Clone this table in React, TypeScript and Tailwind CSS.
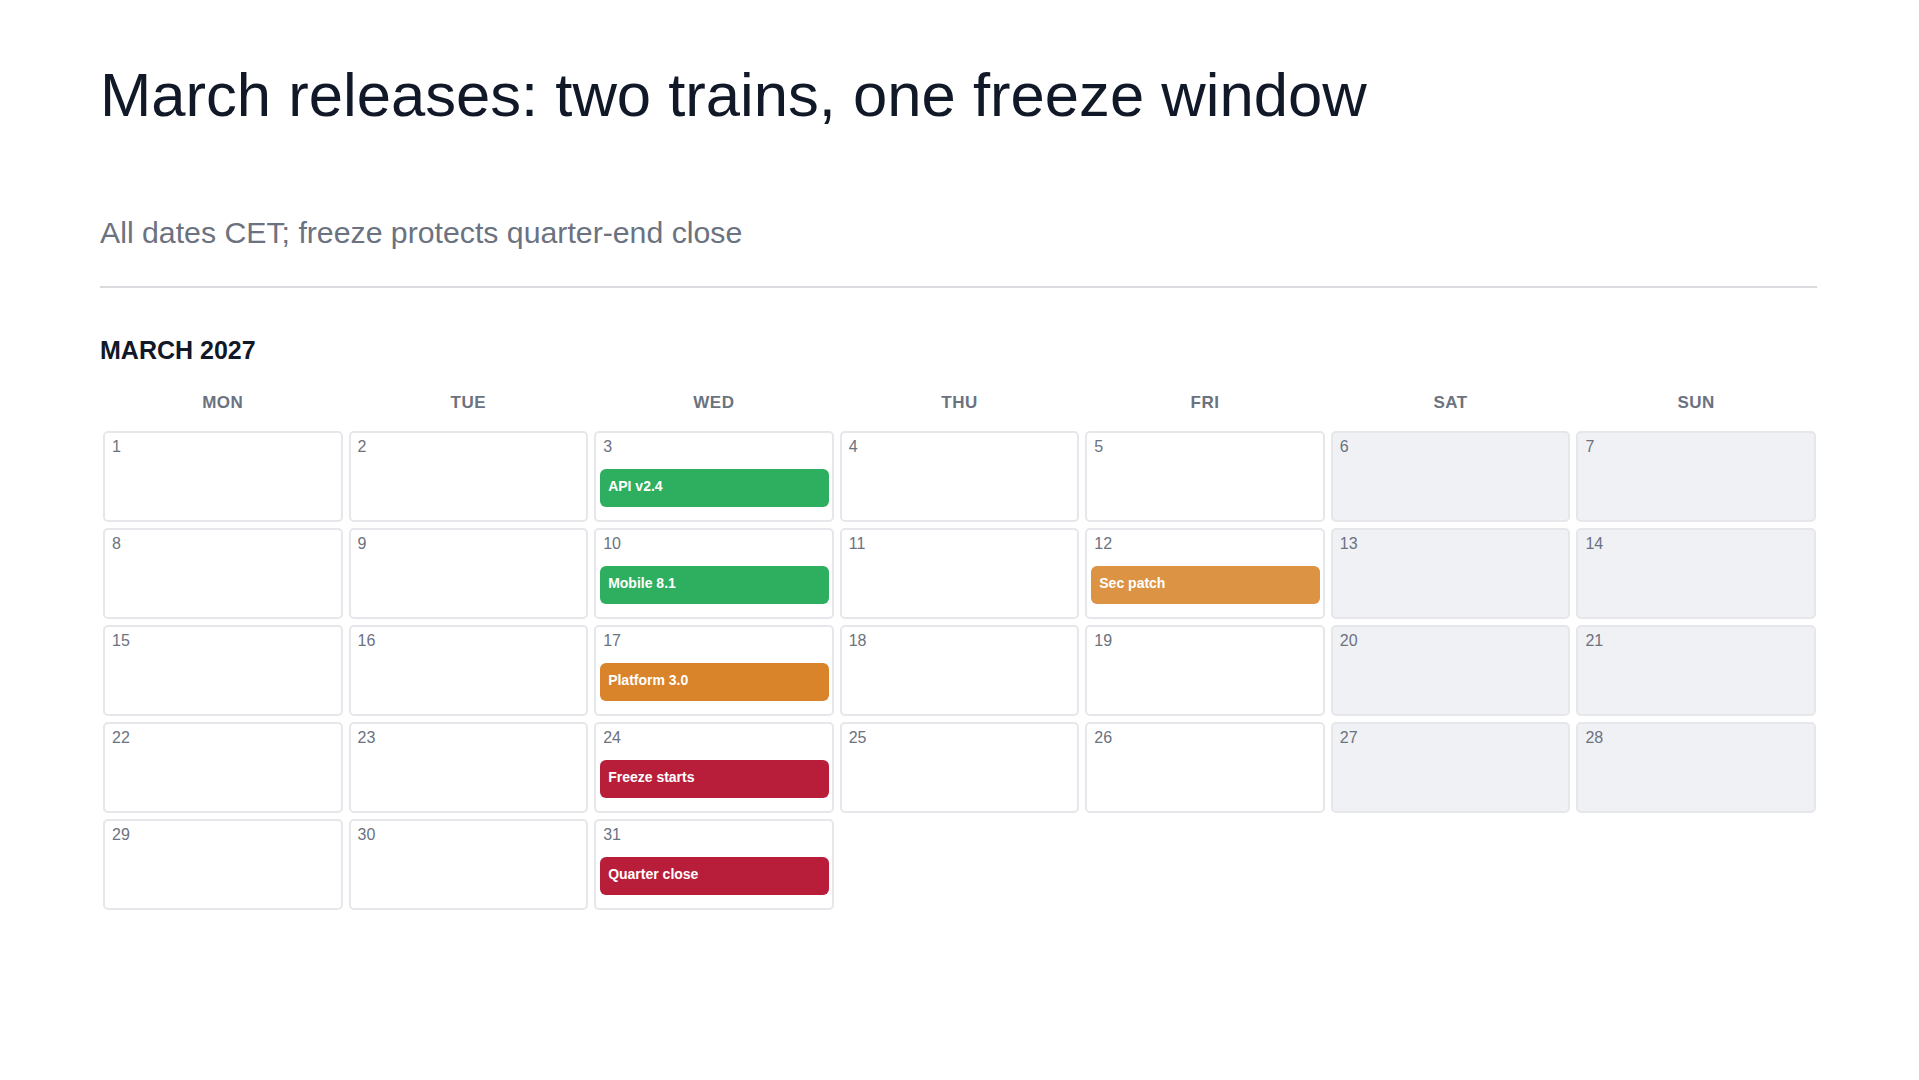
type CalendarEvent = {
  label: string
  color: string
}

type DayCell = {
  day: number
  weekend: boolean
  event?: CalendarEvent
}

const weekdays = ['MON', 'TUE', 'WED', 'THU', 'FRI', 'SAT', 'SUN']

const events: Record<number, CalendarEvent> = {
  3: { label: 'API v2.4', color: 'bg-[#2eae5f]' },
  10: { label: 'Mobile 8.1', color: 'bg-[#2eae5f]' },
  12: { label: 'Sec patch', color: 'bg-[#dc9344]' },
  17: { label: 'Platform 3.0', color: 'bg-[#d9842b]' },
  24: { label: 'Freeze starts', color: 'bg-[#b81e3a]' },
  31: { label: 'Quarter close', color: 'bg-[#b81e3a]' },
}

// March 2027 starts on a Monday, so day n sits in column (n - 1) % 7
const days: DayCell[] = Array.from({ length: 31 }, (_, index) => ({
  day: index + 1,
  weekend: index % 7 >= 5,
  event: events[index + 1],
}))

function DayBox({ cell }: { cell: DayCell }) {
  return (
    <div
      className={`h-[91px] rounded-[5px] border-2 border-[#e6e7eb] py-[3px] pr-[3px] pl-[4px] ${
        cell.weekend ? 'bg-[#f0f1f4]' : 'bg-white'
      }`}
    >
      <div className="h-[33px] pt-[1px] pl-[3px] text-[16px] leading-[20px] text-[#6b7280]">
        {cell.day}
      </div>
      {cell.event ? (
        <div
          className={`h-[38px] rounded-md px-2 pt-[9px] text-[14px] font-bold leading-[16px] text-white ${cell.event.color}`}
        >
          {cell.event.label}
        </div>
      ) : null}
    </div>
  )
}

function App() {
  return (
    <div className="min-h-screen bg-white px-[100px] pt-[58px] font-['Liberation_Sans',Arial,sans-serif]">
      <h1 className="text-[61.6px] leading-[1.2] font-normal text-[#111827]">
        March releases: two trains, one freeze window
      </h1>
      <p className="mt-[83px] text-[30.25px] leading-[36px] text-[#6b7280]">
        All dates CET; freeze protects quarter-end close
      </p>
      <div className="mt-[35px] mr-[2px] h-[2px] bg-[#d9dbdf]" />

      <h2 className="mt-[47px] text-[25px] leading-[30px] font-bold text-[#111827]">
        MARCH 2027
      </h2>

      <div className="mt-[28px] grid grid-cols-7 gap-x-[6px] px-[3px]">
        {weekdays.map((weekday) => (
          <div
            key={weekday}
            className="text-center text-[17px] leading-[20px] font-bold tracking-[0.03em] text-[#6b7280]"
          >
            {weekday}
          </div>
        ))}
      </div>

      <div className="mt-[18px] grid grid-cols-7 gap-x-[6px] gap-y-[6px] px-[3px]">
        {days.map((cell) => (
          <DayBox key={cell.day} cell={cell} />
        ))}
      </div>
    </div>
  )
}

export default App
